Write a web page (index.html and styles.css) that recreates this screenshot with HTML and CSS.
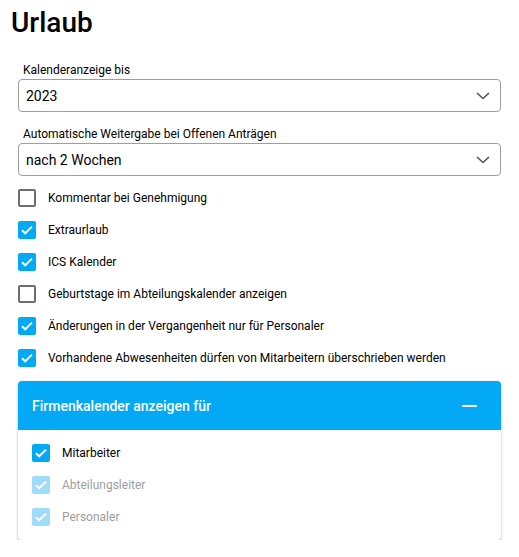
FILE: index.html
```html
<!DOCTYPE html>
<html lang="de">
<head>
    <meta charset="UTF-8">
    <meta name="viewport" content="width=device-width, initial-scale=1.0">
    <title>Urlaub</title>
    <link rel="stylesheet" href="styles.css">
</head>
<body>
    <div class="page">
        <h1 class="title">Urlaub</h1>

        <div class="field">
            <label class="field-label">Kalenderanzeige bis</label>
            <div class="select">
                <span>2023</span>
                <svg class="chevron" width="14" height="8" viewBox="0 0 14 8"><path d="M1 1l6 5.5L13 1" fill="none" stroke="#555" stroke-width="1.6"/></svg>
            </div>
        </div>

        <div class="field">
            <label class="field-label">Automatische Weitergabe bei Offenen Anträgen</label>
            <div class="select">
                <span>nach 2 Wochen</span>
                <svg class="chevron" width="14" height="8" viewBox="0 0 14 8"><path d="M1 1l6 5.5L13 1" fill="none" stroke="#555" stroke-width="1.6"/></svg>
            </div>
        </div>

        <ul class="checks">
            <li class="check"><span class="box"></span>Kommentar bei Genehmigung</li>
            <li class="check"><span class="box on"><svg viewBox="0 0 18 18"><path d="M4 9.2l3.2 3.1L14 5.6" fill="none" stroke="#fff" stroke-width="2"/></svg></span>Extraurlaub</li>
            <li class="check"><span class="box on"><svg viewBox="0 0 18 18"><path d="M4 9.2l3.2 3.1L14 5.6" fill="none" stroke="#fff" stroke-width="2"/></svg></span>ICS Kalender</li>
            <li class="check"><span class="box"></span>Geburtstage im Abteilungskalender anzeigen</li>
            <li class="check"><span class="box on"><svg viewBox="0 0 18 18"><path d="M4 9.2l3.2 3.1L14 5.6" fill="none" stroke="#fff" stroke-width="2"/></svg></span>Änderungen in der Vergangenheit nur für Personaler</li>
            <li class="check"><span class="box on"><svg viewBox="0 0 18 18"><path d="M4 9.2l3.2 3.1L14 5.6" fill="none" stroke="#fff" stroke-width="2"/></svg></span>Vorhandene Abwesenheiten dürfen von Mitarbeitern überschrieben werden</li>
        </ul>

        <div class="card">
            <div class="card-head">
                <span>Firmenkalender anzeigen für</span>
                <span class="minus"></span>
            </div>
            <ul class="checks card-body">
                <li class="check"><span class="box on"><svg viewBox="0 0 18 18"><path d="M4 9.2l3.2 3.1L14 5.6" fill="none" stroke="#fff" stroke-width="2"/></svg></span>Mitarbeiter</li>
                <li class="check disabled"><span class="box on"><svg viewBox="0 0 18 18"><path d="M4 9.2l3.2 3.1L14 5.6" fill="none" stroke="#fff" stroke-width="2"/></svg></span>Abteilungsleiter</li>
                <li class="check disabled"><span class="box on"><svg viewBox="0 0 18 18"><path d="M4 9.2l3.2 3.1L14 5.6" fill="none" stroke="#fff" stroke-width="2"/></svg></span>Personaler</li>
            </ul>
        </div>
    </div>
</body>
</html>
```

FILE: styles.css
```css
body {
    margin: 0;
    background: #fff;
    color: #000;
    font-family: Roboto, "Liberation Sans", Arial, sans-serif;
}
.page { padding: 0 18px; }
.title {
    font-size: 28px;
    font-weight: 500;
    margin: 0 0 0 -7px;
    padding-top: 6px;
    line-height: 34px;
    height: 56px;
}
.field { margin-bottom: 14px; }
.field + .field { margin-bottom: 6px; }
.field-label {
    display: block;
    font-size: 12px;
    line-height: 16px;
    padding-left: 5px;
    margin-bottom: 1px;
}
.select {
    height: 31px;
    border: 1px solid #9e9e9e;
    border-radius: 4px;
    display: flex;
    align-items: center;
    justify-content: space-between;
    padding: 0 10px 0 7px;
    font-size: 14px;
}
.chevron { margin-top: 1px; }
.checks {
    list-style: none;
    margin: 0;
    padding: 0;
}
.check {
    display: flex;
    align-items: center;
    height: 32px;
    font-size: 12px;
}
.box {
    width: 18px;
    height: 18px;
    box-sizing: border-box;
    border: 2px solid #6e6e6e;
    border-radius: 2px;
    margin-right: 12px;
    flex-shrink: 0;
}
.box.on { border: none; background: #03a9f4; }
.box svg { display: block; width: 18px; height: 18px; }
.check.disabled { color: #9e9e9e; }
.check.disabled .box { background: #9fdcf9; }
.card {
    margin-top: 7px;
    border-radius: 4px;
    box-shadow: 0 1px 3px rgba(0, 0, 0, 0.3);
    overflow: hidden;
}
.card-head {
    background: #03a9f4;
    color: #fff;
    height: 49px;
    display: flex;
    align-items: center;
    justify-content: space-between;
    padding: 0 24px 0 14px;
    font-size: 14px;
    font-weight: 500;
}
.minus { width: 15px; height: 2px; background: #fff; }
.card-body { padding: 7px 14px 7px; }
```
